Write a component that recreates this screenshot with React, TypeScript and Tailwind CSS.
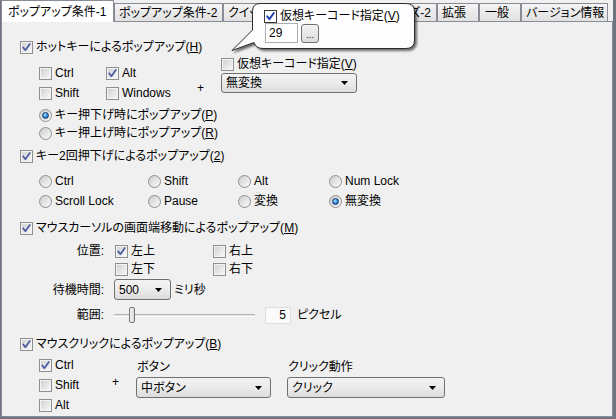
import React from "react";

// Windows 7 風の設定ダイアログ（ポップアップ条件タブ）

type Kid = { children?: React.ReactNode };

function Box({ checked = false, bright = false }: { checked?: boolean; bright?: boolean }) {
  return (
    <span
      className={
        bright
          ? "relative inline-flex h-[13px] w-[13px] shrink-0 border border-[#3a3a3a] bg-white"
          : "relative inline-flex h-[13px] w-[13px] shrink-0 border border-[#8e8f8f] bg-[#f4f4f4] p-px"
      }
    >
      {!bright && <span className="h-full w-full bg-gradient-to-br from-[#d2d2d2] to-[#f7f7f7]" />}
      {checked && (
        <svg className="absolute left-0 top-0" width="11" height="11" viewBox="0 0 11 11">
          <path
            d="M2.2 5.4 L4.4 8.2 L8.8 2"
            fill="none"
            stroke={bright ? "#1f3fb0" : "#4a5aa0"}
            strokeWidth={bright ? 2 : 1.7}
            strokeLinecap="round"
            strokeLinejoin="round"
          />
        </svg>
      )}
    </span>
  );
}

function Radio({ checked = false }: { checked?: boolean }) {
  return (
    <span className="inline-flex h-[13px] w-[13px] shrink-0 items-center justify-center rounded-full border border-[#8e8f8f] bg-gradient-to-br from-[#cdcdcd] to-[#fbfbfb]">
      {checked && (
        <span className="h-[7px] w-[7px] rounded-full border border-[#1b3b66] bg-[radial-gradient(circle_at_40%_35%,#a8e4ff,#2a86d8_55%,#0d4b8e)]" />
      )}
    </span>
  );
}

function Check({ checked, children, bright }: Kid & { checked?: boolean; bright?: boolean }) {
  return (
    <span className="inline-flex items-center gap-[3px] whitespace-nowrap">
      <Box checked={checked} bright={bright} />
      <span>{children}</span>
    </span>
  );
}

function Opt({ checked, children }: Kid & { checked?: boolean }) {
  return (
    <span className="inline-flex items-center gap-[3px] whitespace-nowrap">
      <Radio checked={checked} />
      <span>{children}</span>
    </span>
  );
}

function Arrow() {
  return (
    <svg width="7" height="4" viewBox="0 0 7 4" className="shrink-0">
      <path d="M0 0H7L3.5 4Z" fill="#000" />
    </svg>
  );
}

function Combo({ value, className }: { value: string; className: string }) {
  return (
    <div
      className={
        "flex items-center justify-between rounded-[3px] border border-[#707070] bg-gradient-to-b from-[#f3f3f3] via-[#ebebeb] to-[#dcdcdc] pl-[4px] pr-[8px] " +
        className
      }
    >
      <span className="whitespace-nowrap">{value}</span>
      <Arrow />
    </div>
  );
}

function Tab({ label, className }: { label: string; className: string }) {
  return (
    <div
      className={
        "flex h-[18px] items-center overflow-hidden whitespace-nowrap border border-b-0 border-[#898c95] bg-gradient-to-b from-[#f4f4f4] to-[#e1e1e1] " +
        className
      }
    >
      {label}
    </div>
  );
}

function Balloon() {
  return (
    <div className="absolute left-[226px] top-0 h-[58px] w-[196px]">
      <svg
        className="absolute left-0 top-0 drop-shadow-[2px_2px_1px_rgba(0,0,0,0.55)]"
        width="196"
        height="58"
        viewBox="0 0 196 58"
      >
        <path
          d="M33 3.5 H179 Q187.5 3.5 187.5 11.5 V40 Q187.5 48.5 179 48.5 H36 Q29 48.5 27 42.5 L5 50.5 L25.5 30 V11.5 Q25.5 3.5 33 3.5 Z"
          fill="#fdfdfd"
          stroke="#2b2b2b"
          strokeWidth="1"
        />
      </svg>
      <div className="absolute left-[37px] top-[9px] flex flex-col">
        <div className="flex h-[14px] items-center">
          <Check checked bright>
            仮想キーコード指定(<u>V</u>)
          </Check>
        </div>
        <div className="flex h-[20px] items-center">
          <div className="ml-px flex h-[20px] w-[33px] items-center border border-[#abadb3] bg-white pl-[3px]">29</div>
          <div className="ml-[3px] flex h-[19px] w-[18px] items-end justify-center rounded-[3px] border border-[#707070] bg-gradient-to-b from-[#f3f3f3] to-[#dcdcdc] pb-[2px] text-[9px] leading-none">
            ...
          </div>
        </div>
      </div>
    </div>
  );
}

export default function App() {
  return (
    <div className="relative flex h-[419px] w-[616px] flex-col overflow-hidden border-b-2 border-l border-r-[3px] border-[#6f7480] bg-[#f0f0f0] font-['Liberation_Sans','Noto_Sans_CJK_JP',sans-serif] text-[12px] leading-[16px] text-black [font-feature-settings:'palt']">
      {/* タブ */}
      <div className="flex h-[21px] shrink-0 items-end">
        <div className="relative z-10 -mb-px flex h-[22px] w-[113px] items-center border border-b-0 border-[#898c95] bg-white pl-[6px] whitespace-nowrap">
          ポップアップ条件-1
        </div>
        <Tab label="ポップアップ条件-2" className="w-[109px] pl-[4px]" />
        <Tab label="クイック" className="w-[100px] pl-[4px]" />
        <Tab label="サイズ-2" className="w-[114px] justify-end pr-[5px]" />
        <Tab label="拡張" className="w-[42px] pl-[4px]" />
        <Tab label="一般" className="w-[42px] pl-[5px]" />
        <Tab label="バージョン情報" className="w-[87px] pl-[4px]" />
      </div>

      {/* パネル */}
      <div className="flex flex-1 flex-col border border-[#898c95] bg-[#f0f0f0] pl-[18px]">
        <div className="mt-[17px] flex h-[16px] items-center">
          <Check checked>
            ホットキーによるポップアップ(<u>H</u>)
          </Check>
        </div>

        <div className="flex h-[48px]">
          <div className="ml-[19px] grid w-[157px] grid-cols-[67px_auto] content-start pt-[8px]">
            <div className="flex h-[20px] items-center"><Check>Ctrl</Check></div>
            <div className="flex h-[20px] items-center"><Check checked>Alt</Check></div>
            <div className="flex h-[20px] items-center"><Check>Shift</Check></div>
            <div className="flex h-[20px] items-center"><Check>Windows</Check></div>
          </div>
          <div className="w-[25px] pl-[1px] pt-[25px]">+</div>
          <div className="flex flex-col pt-[1px]">
            <div className="flex h-[16px] items-center">
              <Check>
                仮想キーコード指定(<u>V</u>)
              </Check>
            </div>
            <Combo value="無変換" className="mt-px h-[20px] w-[136px]" />
          </div>
        </div>

        <div className="ml-[19px] mt-[4px] flex h-[16px] items-center">
          <Opt checked>
            キー押下げ時にポップアップ(<u>P</u>)
          </Opt>
        </div>
        <div className="ml-[19px] mt-[2px] flex h-[16px] items-center">
          <Opt>
            キー押上げ時にポップアップ(<u>R</u>)
          </Opt>
        </div>

        <div className="mt-[7px] flex h-[16px] items-center">
          <Check checked>
            キー2回押下げによるポップアップ(<u>2</u>)
          </Check>
        </div>

        <div className="ml-[19px] mt-[8px] grid grid-cols-[109px_90px_91px_auto] gap-y-[2px]">
          <div className="flex h-[18px] items-center"><Opt>Ctrl</Opt></div>
          <div className="flex h-[18px] items-center"><Opt>Shift</Opt></div>
          <div className="flex h-[18px] items-center"><Opt>Alt</Opt></div>
          <div className="flex h-[18px] items-center"><Opt>Num Lock</Opt></div>
          <div className="flex h-[18px] items-center"><Opt>Scroll Lock</Opt></div>
          <div className="flex h-[18px] items-center"><Opt>Pause</Opt></div>
          <div className="flex h-[18px] items-center"><Opt>変換</Opt></div>
          <div className="flex h-[18px] items-center"><Opt checked>無変換</Opt></div>
        </div>

        <div className="mt-[10px] flex h-[16px] items-center">
          <Check checked>
            マウスカーソルの画面端移動によるポップアップ(<u>M</u>)
          </Check>
        </div>

        <div className="mt-[6px] grid grid-cols-[95px_98px_auto]">
          <div className="flex h-[18px] items-center justify-end pr-[11px]">位置:</div>
          <div className="flex h-[18px] items-center"><Check checked>左上</Check></div>
          <div className="flex h-[18px] items-center"><Check>右上</Check></div>
          <div className="h-[18px]" />
          <div className="flex h-[18px] items-center"><Check>左下</Check></div>
          <div className="flex h-[18px] items-center"><Check>右下</Check></div>
        </div>

        <div className="mt-px flex h-[21px] items-center">
          <div className="w-[94px] pr-[10px] text-right">待機時間:</div>
          <Combo value="500" className="h-[21px] w-[57px]" />
          <span className="ml-[3px]">ミリ秒</span>
        </div>

        <div className="mt-[7px] flex h-[16px] items-center">
          <div className="w-[94px] pr-[10px] text-right">範囲:</div>
          <div className="relative flex h-[16px] w-[141px] items-center">
            <div className="h-[3px] w-full border-y border-t-[#b5b5b5] border-b-white bg-[#e3e3e3]" />
            <div className="absolute left-[15px] top-0 h-[16px] w-[6px] rounded-[2px] border border-[#767676] bg-gradient-to-r from-[#f5f5f5] to-[#d9d9d9]" />
          </div>
          <div className="ml-[10px] flex h-[17px] w-[26px] items-center justify-end border border-[#dedede] bg-[#fafafa] pr-[4px]">5</div>
          <span className="ml-[6px]">ピクセル</span>
        </div>

        <div className="mt-[13px] flex h-[16px] items-center">
          <Check checked>
            マウスクリックによるポップアップ(<u>B</u>)
          </Check>
        </div>

        <div className="mt-[3px] flex">
          <div className="ml-[19px] flex w-[70px] flex-col">
            <div className="flex h-[20px] items-center"><Check checked>Ctrl</Check></div>
            <div className="flex h-[20px] items-center"><Check>Shift</Check></div>
            <div className="flex h-[20px] items-center"><Check>Alt</Check></div>
          </div>
          <div className="w-[27px] pl-[3px] pt-[19px]">+</div>
          <div className="flex flex-col pt-[4px]">
            <div className="h-[16px] pl-px">ボタン</div>
            <Combo value="中ボタン" className="mt-[2px] h-[21px] w-[135px]" />
          </div>
          <div className="ml-[16px] flex flex-col pt-[4px]">
            <div className="h-[16px] pl-px">クリック動作</div>
            <Combo value="クリック" className="mt-[2px] h-[21px] w-[158px]" />
          </div>
        </div>
      </div>

      <Balloon />
    </div>
  );
}
